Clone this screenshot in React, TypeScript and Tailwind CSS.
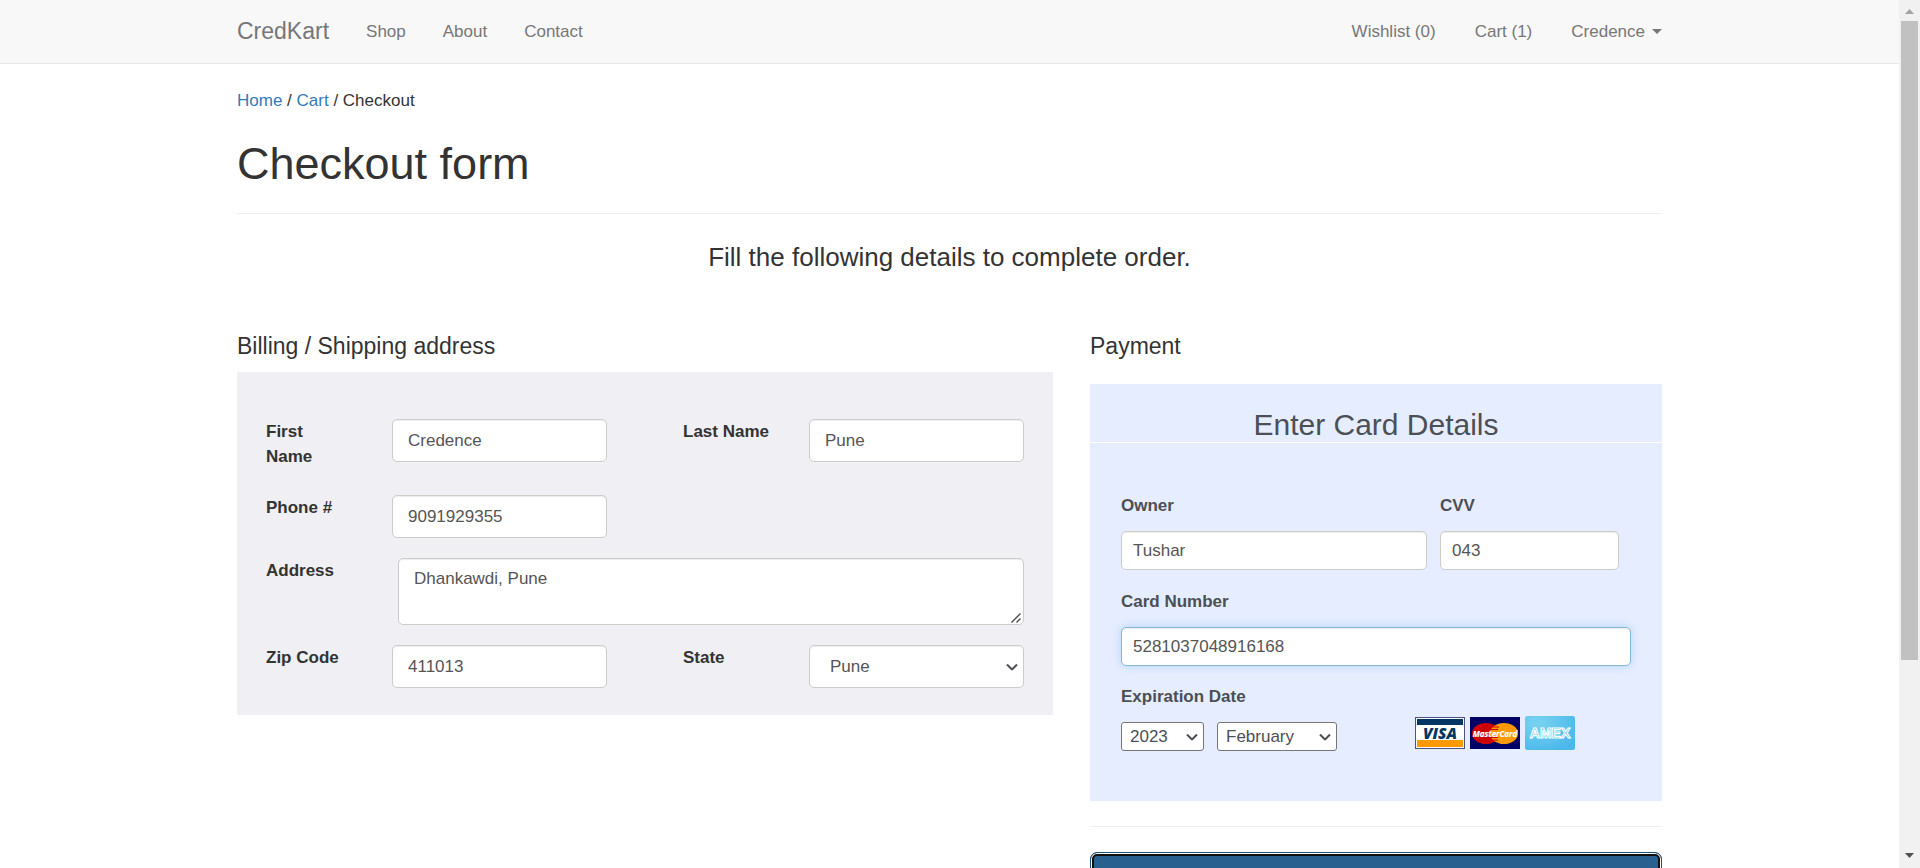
import React from "react";

const control =
  "block w-full rounded-[5px] border border-[#ccc] bg-white text-[17px] leading-6 text-[#555] shadow-[inset_0_1px_1px_rgba(0,0,0,0.075)] outline-none";
const field = `${control} h-[43px] px-[15px]`;
const cardField = `${control} h-[39px] px-[11px]`;
const label = "pb-1.5 font-bold";
const pair = "grid grid-cols-[126fr_215fr] items-start";
const navLink = "text-[17px] text-[#777]";
const smallSelect =
  "block h-[29px] w-full appearance-none rounded-[3px] border border-[#767676] bg-white px-2 text-[17px] leading-6 text-[#4c4f55]";

type SelectProps = React.ComponentProps<"select"> & { wrapperClass?: string };

function Select({ wrapperClass = "", children, ...rest }: SelectProps) {
  return (
    <div className={`relative ${wrapperClass}`}>
      <select {...rest}>{children}</select>
      <svg
        className="pointer-events-none absolute top-1/2 right-1.5 h-[7px] w-3 -translate-y-1/2"
        viewBox="0 0 12 7"
        fill="none"
        stroke="#4c4f55"
        strokeWidth="2"
      >
        <path d="M1 1l5 5 5-5" />
      </svg>
    </div>
  );
}

function VisaLogo() {
  return (
    <svg className="h-8 w-[50px]" viewBox="0 0 50 32" role="img" aria-label="Visa">
      <rect x="0.5" y="0.5" width="49" height="31" fill="#fff" stroke="#4c5084" />
      <rect x="2" y="2" width="46" height="6" fill="#003663" />
      <rect x="2" y="23" width="46" height="7" fill="#ff9900" />
      <text x="25" y="21.500" textAnchor="middle" fontFamily="Open Sans, sans-serif" fontWeight="800" fontStyle="italic" fontSize="15.500" fill="#003663">
        VISA
      </text>
    </svg>
  );
}

function MasterCardLogo() {
  return (
    <svg className="h-8 w-[50px]" viewBox="0 0 50 32" role="img" aria-label="MasterCard">
      <rect width="50" height="32" fill="#000066" />
      <ellipse cx="16" cy="16.5" rx="14" ry="10.5" fill="#cc0000" />
      <ellipse cx="34" cy="16.5" rx="14" ry="10.5" fill="#ff9900" />
      <path d="M22 10h7M21 12.500h7M21 20.500h7M22 23h6" stroke="#cc0000" strokeWidth="1" />
      <text x="25" y="19.500" textAnchor="middle" fontFamily="Open Sans, sans-serif" fontWeight="700" fontStyle="italic" fontSize="8" fill="#fff" stroke="#fff" strokeWidth="0.2">
        MasterCard
      </text>
    </svg>
  );
}

function AmexLogo() {
  return (
    <svg className="h-[34px] w-[50px]" viewBox="0 0 50 34" role="img" aria-label="Amex">
      <defs>
        <radialGradient id="amex" cx="0.25" cy="0.2" r="0.9">
          <stop offset="0" stopColor="#79d3f1" />
          <stop offset="1" stopColor="#49b8ea" />
        </radialGradient>
      </defs>
      <rect width="50" height="34" rx="2.500" fill="url(#amex)" />
      <text x="25" y="22" textAnchor="middle" fontFamily="Liberation Sans, sans-serif" fontWeight="700" fontSize="14" fill="#56c0ec" stroke="#fff" strokeWidth="1.1">
        AMEX
      </text>
    </svg>
  );
}

function Scrollbar() {
  return (
    <div className="flex w-[21px] shrink-0 flex-col items-center bg-[#f1f1f1]" aria-hidden="true">
      <div className="flex h-[21px] items-center pt-0.5">
        <svg className="h-[5px] w-[9px]" viewBox="0 0 9 5"><path d="M0 5 4.500 0 9 5z" fill="#a3a3a3" /></svg>
      </div>
      <div className="flex w-full flex-1 flex-col px-0.5">
        <div className="basis-[77.4%] bg-[#c1c1c1]" />
      </div>
      <div className="flex h-[21px] items-center pb-1">
        <svg className="h-[5px] w-[9px]" viewBox="0 0 9 5"><path d="M0 0h9L4.500 5z" fill="#505050" /></svg>
      </div>
    </div>
  );
}

export default function App() {
  return (
    <div className="flex h-screen overflow-hidden bg-white font-['Liberation_Sans',Arial,sans-serif] text-[17px] leading-[25px] text-[#333]">
      <div className="min-w-0 flex-1">
        <nav className="border-b border-[#e7e7e7] bg-[#f8f8f8]">
          <div className="mx-auto flex h-[63px] max-w-[1425px] items-center justify-between">
            <div className="flex items-center gap-[37px]">
              <a href="#" className="text-[23px] text-[#777]">CredKart</a>
              <a href="#shop" className={navLink}>Shop</a>
              <a href="#about" className={navLink}>About</a>
              <a href="#contact" className={navLink}>Contact</a>
            </div>
            <div className="flex items-center gap-[39px]">
              <a href="#wishlist" className={navLink}>Wishlist (0)</a>
              <a href="#cart" className={navLink}>Cart (1)</a>
              <button type="button" className={`${navLink} flex items-center gap-[7px]`}>
                Credence
                <svg className="h-[5px] w-2.5" viewBox="0 0 10 5"><path d="M0 0h10L5 5z" fill="#777" /></svg>
              </button>
            </div>
          </div>
        </nav>

        <main className="mx-auto max-w-[1425px] pt-6">
          <p>
            <a href="#home" className="text-[#337ab7]">Home</a> / <a href="#cart" className="text-[#337ab7]">Cart</a> / Checkout
          </p>
          <h1 className="mt-[26px] text-[45px] leading-[50px]">Checkout form</h1>
          <hr className="mt-6 border-[#eee]" />
          <p className="mt-[25px] text-center text-[26px] leading-9">Fill the following details to complete order.</p>

          <form className="mt-[58px] grid grid-cols-[816fr_572fr] items-start gap-x-[37px]">
            <section>
              <h2 className="text-[23px] leading-[26px]">Billing / Shipping address</h2>
              <div className="mt-[13px] flex flex-col gap-5 bg-[#f0eff4] px-[29px] pt-[47px] pb-[27px]">
                <div className="grid grid-cols-2 gap-x-[76px]">
                  <div className={pair}>
                    <label htmlFor="first" className={label}>First<br />Name</label>
                    <input id="first" className={field} defaultValue="Credence" />
                  </div>
                  <div className={pair}>
                    <label htmlFor="last" className={label}>Last Name</label>
                    <input id="last" className={field} defaultValue="Pune" />
                  </div>
                </div>
                <div className="grid grid-cols-2 gap-x-[76px]">
                  <div className={pair}>
                    <label htmlFor="phone" className={label}>Phone #</label>
                    <input id="phone" className={field} defaultValue="9091929355" />
                  </div>
                </div>
                <div className="flex items-start">
                  <label htmlFor="address" className={`${label} w-[132px] shrink-0`}>Address</label>
                  <div className="relative flex-1">
                    <textarea id="address" className={`${control} h-[67px] resize-none px-[15px] py-2`} defaultValue="Dhankawdi, Pune" />
                    <svg className="pointer-events-none absolute right-[3px] bottom-0.5 h-2.5 w-2.5" viewBox="0 0 10 10" stroke="#4a4a4a" strokeWidth="1.300">
                      <path d="M0.500 9.500l9-9M5.500 9.500l4-4" />
                    </svg>
                  </div>
                </div>
                <div className="grid grid-cols-2 gap-x-[76px]">
                  <div className={pair}>
                    <label htmlFor="zip" className={label}>Zip Code</label>
                    <input id="zip" className={field} defaultValue="411013" />
                  </div>
                  <div className={pair}>
                    <label htmlFor="state" className={label}>State</label>
                    <Select id="state" className={`${control} h-[43px] appearance-none px-5`} defaultValue="Pune">
                      <option>Pune</option>
                      <option>Mumbai</option>
                    </Select>
                  </div>
                </div>
              </div>
            </section>

            <section>
              <h2 className="text-[23px] leading-[26px]">Payment</h2>
              <div className="mt-[25px] bg-[#e6edff] text-[#4c4f55]">
                <h3 className="border-b border-white pt-6 text-center text-[30px] leading-[34px]">Enter Card Details</h3>
                <div className="px-[31px] py-[50px]">
                  <div className="flex gap-[13px]">
                    <div className="basis-3/5">
                      <label htmlFor="owner" className="block font-bold">Owner</label>
                      <input id="owner" className={`${cardField} mt-[13px]`} defaultValue="Tushar" />
                    </div>
                    <div className="basis-[35%]">
                      <label htmlFor="cvv" className="block font-bold">CVV</label>
                      <input id="cvv" className={`${cardField} mt-[13px]`} defaultValue="043" />
                    </div>
                  </div>
                  <label htmlFor="number" className="mt-[19px] block font-bold">Card Number</label>
                  <input
                    id="number"
                    className="mt-[13px] block h-[39px] w-full rounded-[5px] border border-[#85b7d9] bg-white px-[11px] text-[17px] leading-6 text-[#555] shadow-[inset_0_1px_1px_rgba(0,0,0,0.075),0_0_10px_rgba(102,175,233,0.4)] outline-none"
                    defaultValue="5281037048916168"
                  />
                  <div className="mt-[18px] flex items-start">
                    <fieldset className="basis-[57.6%]">
                      <legend className="font-bold">Expiration Date</legend>
                      <div className="mt-[13px] flex gap-[13px]">
                        <Select aria-label="Year" wrapperClass="w-[83px]" className={smallSelect} defaultValue="2023">
                          <option>2023</option>
                          <option>2024</option>
                        </Select>
                        <Select aria-label="Month" wrapperClass="w-[120px]" className={smallSelect} defaultValue="February">
                          <option>January</option>
                          <option>February</option>
                        </Select>
                      </div>
                    </fieldset>
                    <div className="flex items-center gap-[5px] pt-8">
                      <VisaLogo />
                      <MasterCardLogo />
                      <AmexLogo />
                    </div>
                  </div>
                </div>
              </div>
              <hr className="mt-[25px] border-[#eee]" />
              <button
                type="submit"
                aria-label="Place order"
                className="mt-[25px] block h-14 w-full rounded-[7px] border border-[#204d74] bg-[#286090] shadow-[inset_0_0_0_1px_#fff,inset_0_0_0_3px_#101010]"
              />
            </section>
          </form>
        </main>
      </div>
      <Scrollbar />
    </div>
  );
}
